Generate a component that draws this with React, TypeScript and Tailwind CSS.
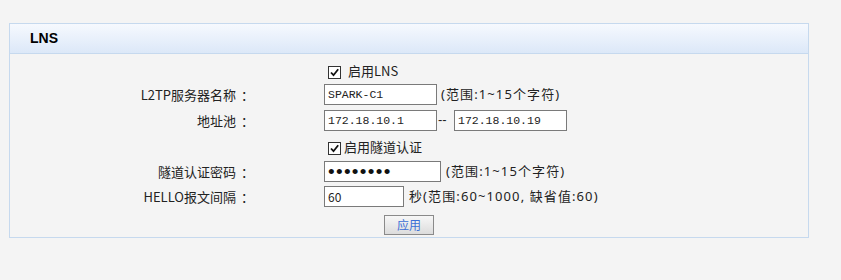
import React from 'react';

const cjk = "font-['Noto_Sans_CJK_SC','Noto_Sans',sans-serif]";
const note = "font-['Noto_Sans','Noto_Sans_CJK_SC',sans-serif] text-[13px] tracking-[1.1px] text-[#222]";
const mono = "font-['Liberation_Mono','Noto_Sans_CJK_SC',monospace]";

const Checkbox: React.FC = () => (
  <span className="inline-flex h-[13px] w-[13px] items-center justify-center border border-[#333] bg-white">
    <svg viewBox="0 0 11 11" className="h-[11px] w-[11px]">
      <path d="M2 5.5 L4.5 8.2 L9.2 2.2" fill="none" stroke="#111" strokeWidth="1.8" />
    </svg>
  </span>
);

const Field: React.FC<{ width: string; children: React.ReactNode; className?: string }> = ({
  width,
  children,
  className = '',
}) => (
  <div
    className={`flex h-[21px] items-center border border-[#7a7a7a] bg-white pl-[3px] text-[12px] text-[#222] ${width} ${className}`}
  >
    {children}
  </div>
);

interface RowProps {
  label?: string;
  className?: string;
  children: React.ReactNode;
}

const Row: React.FC<RowProps> = ({ label, className = '', children }) => (
  <div className={`flex items-center ${className}`}>
    <div className="w-[244px] whitespace-nowrap text-right text-[13px] text-[#222]">
      {label && (
        <>
          {label}
          <span className="ml-[5px]">：</span>
        </>
      )}
    </div>
    <div className="w-[70px]" />
    <div className="flex items-center">{children}</div>
  </div>
);

export default function App() {
  return (
    <div className={`min-h-[280px] w-[841px] bg-[#f4f4f4] pt-[23px] ${cjk}`}>
      <div className="ml-[9px] w-[800px] border border-[#c6d9ee]">
        <div className="flex h-[30px] items-center border-b border-[#c6d9ee] bg-gradient-to-b from-[#f6f9fe] to-[#dce8f8] pl-[20px]">
          <span className="font-['Liberation_Sans',sans-serif] text-[14px] font-bold text-black">LNS</span>
        </div>

        <div className="pb-[2px] pt-[6px]">
          <Row className="h-[22px]">
            <span className="ml-[4px]">
              <Checkbox />
            </span>
            <span className="ml-[7px] text-[13px] text-[#222]">启用LNS</span>
          </Row>

          <Row label="L2TP服务器名称" className="mt-[2px]">
            <Field width="w-[113px]" className={mono}>
              <span className="text-[11.5px]">SPARK-C1</span>
            </Field>
            <span className={`ml-[4px] ${note}`}>(范围:1~15个字符)</span>
          </Row>

          <Row label="地址池" className="mt-[5px]">
            <Field width="w-[113px]" className={mono}>
              <span className="text-[11.5px]">172.18.10.1</span>
            </Field>
            <span className="w-[17px] pb-[3px] pl-[1px] font-['Liberation_Sans',sans-serif] text-[13px] leading-none text-[#222]">
              --
            </span>
            <Field width="w-[113px]" className={mono}>
              <span className="text-[11.5px]">172.18.10.19</span>
            </Field>
          </Row>

          <Row className="mt-[5px] h-[21px]">
            <span className="ml-[4px]">
              <Checkbox />
            </span>
            <span className="ml-[3px] text-[13px] text-[#222]">启用隧道认证</span>
          </Row>

          <Row label="隧道认证密码" className="mt-[4px]">
            <Field width="w-[117px]">
              <span className="font-['Liberation_Sans',sans-serif] text-[19px] leading-none tracking-[1.3px] text-[#111]">
                ••••••••
              </span>
            </Field>
            <span className={`ml-[5px] ${note}`}>(范围:1~15个字符)</span>
          </Row>

          <Row label="HELLO报文间隔" className="mt-[4px]">
            <Field width="w-[80px]">60</Field>
            <span className={`ml-[5px] ${note}`}>秒(范围:60~1000, 缺省值:60)</span>
          </Row>

          <div className="mt-[8px] flex justify-center">
            <button className="h-[20px] w-[50px] border border-[#8a8a8a] bg-gradient-to-b from-[#f7f7f7] to-[#dcdcdc] text-[12px] leading-none text-[#3d6fd6]">
              应用
            </button>
          </div>
        </div>
      </div>
    </div>
  );
}
